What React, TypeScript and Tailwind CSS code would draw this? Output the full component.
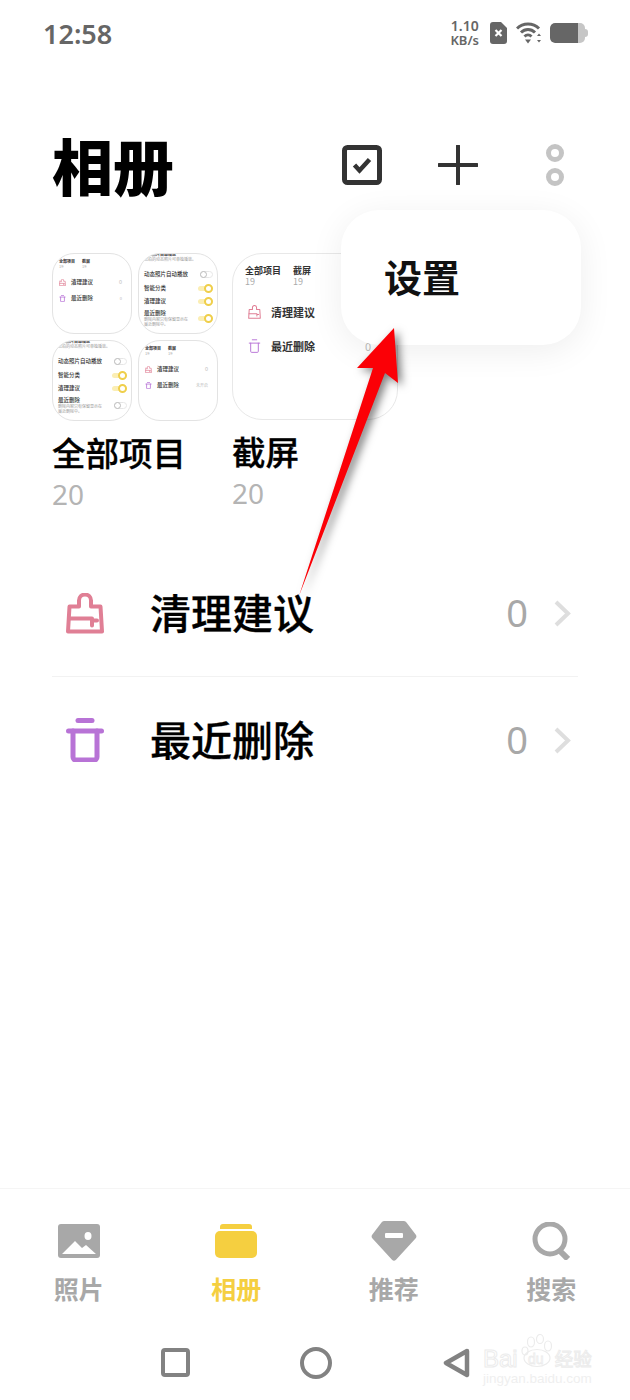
const CJK = "font-['Noto_Sans_CJK_SC','Noto_Sans',sans-serif]";

function Toggle({ on }: { on: boolean }) {
  return on ? (
    <span className="relative block h-[5px] w-[15px] shrink-0 rounded-full bg-[#fbeeb4]">
      <span className="absolute -top-[2px] right-0 size-[9px] rounded-full border-2 border-[#efcf4c] bg-white" />
    </span>
  ) : (
    <span className="relative block h-[7px] w-[13px] shrink-0 rounded-full border border-[#e6e6e6]">
      <span className="absolute -top-px -left-px size-[7px] rounded-full border border-[#bbbbbb] bg-white" />
    </span>
  );
}

function SettingsTile({ lastOn }: { lastOn: boolean }) {
  return (
    <div className="flex h-[81px] w-20 flex-col overflow-hidden rounded-[22px] border border-[#e3e3e3] pr-[4px] pl-[5px] text-[5.500px] leading-[8px] font-medium text-[#333]">
      <div className="mt-[-2px] h-[13px] text-[4px] leading-[5px] font-normal text-[#999]">
        <p className="font-bold text-[#333]">动态照片自动播放</p>
        <p>您拍的动态照片可单独播放。</p>
      </div>
      <div className="mt-[5px] flex items-center justify-between">
        <span>动态照片自动播放</span>
        <Toggle on={false} />
      </div>
      <div className="mt-[6px] flex items-center justify-between">
        <span>智能分类</span>
        <Toggle on />
      </div>
      <div className="mt-[5px] flex items-center justify-between">
        <span>清理建议</span>
        <Toggle on />
      </div>
      <div className="mt-[4px] flex items-center justify-between">
        <div className="w-[46px]">
          <p>最近删除</p>
          <p className="text-[4px] leading-[5px] font-normal text-[#999]">删除内容只有保留显示在最近删除中。</p>
        </div>
        <Toggle on={lastOn} />
      </div>
    </div>
  );
}

function BrushIcon({ className, stroke = 4 }: { className: string; stroke?: number }) {
  return (
    <svg viewBox="0 0 38 40" className={className} fill="none" stroke="currentColor" strokeWidth={stroke} strokeLinejoin="round" strokeLinecap="round">
      <path d="M13 13V7a6 6 0 0 1 12 0v6h9.500L36 38H2l1.500-25Z" />
      <path d="M3 25h23v7M26 27h5" />
    </svg>
  );
}

function TrashIcon({ className, stroke = 5 }: { className: string; stroke?: number }) {
  return (
    <svg viewBox="0 0 38 44" className={className} fill="none" stroke="currentColor" strokeWidth={stroke} strokeLinecap="round" strokeLinejoin="round">
      <path d="M12 2.500h14" />
      <path d="M2.500 13h33" />
      <path d="M7 13v26a3 3 0 0 0 3 3h18a3 3 0 0 0 3-3V13" />
    </svg>
  );
}

function HomeTile({ second }: { second: string }) {
  return (
    <div className="h-[81px] w-20 overflow-hidden rounded-[22px] border border-[#e3e3e3] px-[6px] pt-[5px] text-[#333]">
      <div className="flex gap-[7px] text-[4px] leading-[5px] font-bold">
        <div>
          <p>全部项目</p>
          <p className="font-normal text-[#aaa]">19</p>
        </div>
        <div>
          <p>截屏</p>
          <p className="font-normal text-[#aaa]">19</p>
        </div>
      </div>
      <div className="mt-[9px] flex items-center text-[5.500px] leading-[8px] font-medium">
        <BrushIcon className="mr-[5px] h-[7px] w-[7px] text-[#e07f95]" />
        <span>清理建议</span>
        <span className="ml-auto pr-[3px] font-normal text-[#bbb]">0</span>
      </div>
      <div className="mt-[8px] flex items-center text-[5.500px] leading-[8px] font-medium">
        <TrashIcon className="mr-[5px] h-[7px] w-[7px] text-[#b873d6]" />
        <span>最近删除</span>
        <span className="ml-auto pr-[3px] text-[4px] font-normal text-[#bbb]">{second}</span>
      </div>
    </div>
  );
}

function AlbumLarge() {
  return (
    <div className="h-[167px] w-[166px] overflow-hidden rounded-[30px] border border-[#e8e8e8] pt-[11px] pl-[12px] text-[#333]">
      <div className="flex gap-[12px] text-[9px] leading-[11px] font-bold">
        <div>
          <p>全部项目</p>
          <p className="font-normal text-[#aaa]">19</p>
        </div>
        <div>
          <p>截屏</p>
          <p className="font-normal text-[#aaa]">19</p>
        </div>
      </div>
      <div className="mt-[18px] ml-[3px] flex items-center text-[11px] leading-[14px] font-bold">
        <BrushIcon className="mr-[10px] h-[14px] w-[13px] text-[#e07f95]" stroke={3} />
        <span>清理建议</span>
      </div>
      <div className="mt-[20px] ml-[3px] flex items-center text-[11px] leading-[14px] font-bold">
        <TrashIcon className="mr-[10px] h-[14px] w-[13px] text-[#b873d6]" stroke={3} />
        <span>最近删除</span>
        <span className="ml-[50px] text-[11px] font-normal text-[#bbb]">0</span>
      </div>
    </div>
  );
}

function ListRow({ icon, label }: { icon: React.ReactNode; label: string }) {
  return (
    <div className="flex h-[126px] items-center pr-[7px] pl-[14px]">
      <div className="flex w-[84px] items-center">{icon}</div>
      <span className="mt-[-3px] text-[41px] leading-none font-medium text-black [-webkit-text-stroke:0.3px_#000]">{label}</span>
      <span className="mt-[-2px] ml-auto font-['Noto_Sans',sans-serif] text-[38px] leading-none text-[#a8a8a8]">0</span>
      <svg viewBox="0 0 17 27" className="ml-[26px] h-[27px] w-[17px]" fill="none">
        <path d="M2 2l12 11.500L2 25" stroke="#dedede" strokeWidth="4" />
      </svg>
    </div>
  );
}

function NavItem({ icon, label, active }: { icon: React.ReactNode; label: string; active?: boolean }) {
  return (
    <div className={`flex w-1/4 flex-col items-center ${active ? 'text-[#f5cf40]' : 'text-[#a8a8a8]'}`}>
      <div className="flex h-[40px] items-center">{icon}</div>
      <span className="mt-[10px] text-[25px] leading-[34px] font-bold">{label}</span>
    </div>
  );
}

export default function App() {
  return (
    <div className={`relative flex h-[1400px] w-[630px] flex-col overflow-hidden bg-white ${CJK}`}>
      {/* status bar */}
      <div className="flex h-[66px] items-center pr-[42px] pl-[43px] text-[#666]">
        <span className="font-['Noto_Sans',sans-serif] text-[27px] leading-none font-semibold">12:58</span>
        <div className="ml-auto flex items-center">
          <div className="text-center font-['Noto_Sans',sans-serif] text-[13px] leading-[14px] font-semibold">
            <p className="text-[14px]">1.10</p>
            <p>KB/s</p>
          </div>
          <svg viewBox="0 0 17 22" className="ml-[11px] h-[22px] w-[17px]">
            <path d="M3 0h8l6 6v13a3 3 0 0 1-3 3H3a3 3 0 0 1-3-3V3a3 3 0 0 1 3-3Z" fill="#666" />
            <path d="M5.500 8l6 6M11.500 8l-6 6" stroke="#fff" strokeWidth="2.200" />
          </svg>
          <svg viewBox="0 0 26 22" className="ml-[9px] h-[22px] w-[26px]" fill="none" stroke="#666" strokeWidth="3">
            <path d="M1 6.500c6-6 16-6 22 0" />
            <path d="M5 10.500c4-4 10-4 14 0" />
            <path d="M8.500 14.500c2-2 5-2 7 0" />
            <path d="M9 17.500h6L12 21.500Z" fill="#666" stroke="none" />
            <path d="M21 14l2-2.500 2 2.500ZM21 18l2 2.500 2-2.500Z" fill="#666" stroke="none" />
          </svg>
          <div className="ml-[8px] flex h-[20px] w-[35px] overflow-hidden rounded-[5px] bg-[#c6c6c6]">
            <div className="h-full w-[28px] rounded-l-[5px] bg-[#666]" />
          </div>
          <div className="h-[8px] w-[3px] rounded-r-full bg-[#c6c6c6]" />
        </div>
      </div>

      {/* header */}
      <div className="mt-[35px] flex h-[127px] items-center pr-[66px] pl-[52px]">
        <h1 className="text-[61px] leading-none font-black text-black">相册</h1>
        <svg viewBox="0 0 40 40" className="ml-auto size-[40px]" fill="none">
          <rect x="2.500" y="2.500" width="35" height="35" rx="3" stroke="#333" strokeWidth="5" />
          <path d="M12.500 20l5 5.500 10-11" stroke="#333" strokeWidth="4.500" />
        </svg>
        <svg viewBox="0 0 40 40" className="ml-[56px] size-[40px]" fill="none">
          <path d="M20 1v38M1 20h38" stroke="#333" strokeWidth="4" strokeLinecap="round" />
        </svg>
        <svg viewBox="0 0 18 42" className="ml-[68px] h-[42px] w-[18px]" fill="none">
          <circle cx="9" cy="9" r="6.500" stroke="#c4c4c4" strokeWidth="5" />
          <circle cx="9" cy="33" r="6.500" stroke="#c4c4c4" strokeWidth="5" />
        </svg>
      </div>

      {/* albums */}
      <div className="mt-[25px] flex gap-[14px] pl-[52px]">
        <div className="w-[166px]">
          <div className="grid grid-cols-2 gap-[6px]">
            <HomeTile second="0" />
            <SettingsTile lastOn />
            <SettingsTile lastOn={false} />
            <HomeTile second="未开启" />
          </div>
          <p className="mt-[13px] text-[33.500px] leading-[36px] font-medium whitespace-nowrap text-black [-webkit-text-stroke:0.3px_#000]">全部项目</p>
          <p className="mt-[6px] font-['Noto_Sans',sans-serif] text-[28px] leading-[36px] text-[#b4b4b4]">20</p>
        </div>
        <div className="w-[166px]">
          <AlbumLarge />
          <p className="mt-[13px] text-[33.500px] leading-[36px] font-medium text-black [-webkit-text-stroke:0.3px_#000]">截屏</p>
          <p className="mt-[6px] font-['Noto_Sans',sans-serif] text-[28px] leading-[36px] text-[#b4b4b4]">20</p>
        </div>
      </div>

      {/* rows */}
      <div className="mx-[52px] mt-[38px]">
        <ListRow icon={<BrushIcon className="h-[41px] w-[38px] text-[#e07f95]" />} label="清理建议" />
        <div className="border-t border-[#f2f2f2]" />
        <ListRow icon={<TrashIcon className="h-[44px] w-[38px] text-[#b873d6]" />} label="最近删除" />
      </div>

      <div className="flex-1" />

      {/* bottom tabs */}
      <div className="flex h-[139px] border-t border-[#f5f5f5] pt-[32px]">
        <NavItem
          label="照片"
          icon={
            <svg viewBox="0 0 42 34" className="h-[34px] w-[42px]">
              <rect width="42" height="34" rx="3" fill="#a8a8a8" />
              <path d="M4 30l13-13 7 7 4-3 10 9Z" fill="#fff" />
              <ellipse cx="30" cy="12" rx="3.500" ry="4" fill="#fff" />
            </svg>
          }
        />
        <NavItem
          active
          label="相册"
          icon={
            <svg viewBox="0 0 42 34" className="h-[34px] w-[42px]" fill="#f5cf40">
              <path d="M5 5V3a3 3 0 0 1 3-3h26a3 3 0 0 1 3 3v2Z" />
              <rect y="7" width="42" height="27" rx="5" />
            </svg>
          }
        />
        <NavItem
          label="推荐"
          icon={
            <svg viewBox="0 0 46 40" className="h-[40px] w-[46px]">
              <path d="M13 0h20a3 3 0 0 1 2.500 1.500L45 14a3 3 0 0 1-.5 3.500L25 38.800a3 3 0 0 1-4 0L1.500 17.500A3 3 0 0 1 1 14L10.500 1.500A3 3 0 0 1 13 0Z" fill="#a8a8a8" />
              <rect x="14" y="12" width="18" height="5" rx="1" fill="#fff" />
            </svg>
          }
        />
        <NavItem
          label="搜索"
          icon={
            <svg viewBox="0 0 38 38" className="h-[38px] w-[38px]" fill="none" stroke="#a8a8a8">
              <circle cx="18" cy="17" r="15" strokeWidth="5" />
              <path d="M28 29l8 8" strokeWidth="6" />
            </svg>
          }
        />
      </div>

      {/* system nav */}
      <div className="flex h-[73px] items-start pt-[21px] pl-[161px]">
        <div className="size-[29px] rounded-[4px] border-[4px] border-[#828282]" />
        <div className="mt-[-1px] ml-[110px] h-[32px] w-[32px] rounded-full border-[4px] border-[#828282]" />
        <svg viewBox="0 0 28 30" className="ml-[111px] h-[30px] w-[28px]" fill="none">
          <path d="M24 3L3 15l21 12Z" stroke="#828282" strokeWidth="4.500" strokeLinejoin="round" />
        </svg>
      </div>

      {/* settings popup */}
      <div className="absolute top-[210px] left-[341px] flex h-[135px] w-[240px] items-center rounded-[38px] bg-white pb-[4px] pl-[43px] shadow-[0_6px_34px_rgba(0,0,0,0.07)]">
        <span className="text-[38px] leading-none font-bold text-[#111]">设置</span>
      </div>

      {/* red annotation arrow */}
      <svg viewBox="0 0 630 1400" className="pointer-events-none absolute inset-0 h-[1400px] w-[630px] drop-shadow-[4px_3px_4px_rgba(0,0,0,0.5)]">
        <path d="M394 328L357 368L373 368L299 596L385 373L398 383Z" fill="#fb0006" />
      </svg>

      {/* baidu watermark */}
      <div className="absolute top-[1347px] left-[483px] w-[112px] font-['Liberation_Sans',sans-serif] text-white">
        <div className="flex h-[23px] items-center text-[24px] leading-[23px] [-webkit-text-stroke:1px_#ececec]">
          <span>Bai</span>
          <span className={`ml-[37px] text-[18.500px] whitespace-nowrap ${CJK}`}>经验</span>
        </div>
        <p className="mt-[2px] text-[13.500px] leading-[14px] whitespace-nowrap text-[#efefef]">jingyan.baidu.com</p>
      </div>
      <svg viewBox="0 0 34 34" className="absolute top-[1334px] left-[520px] h-[34px] w-[34px]" fill="none" stroke="#ececec" strokeWidth="1.200">
        <ellipse cx="5" cy="17" rx="3" ry="4" />
        <ellipse cx="11" cy="8" rx="3.500" ry="5" />
        <ellipse cx="20" cy="5" rx="3.500" ry="4.500" />
        <ellipse cx="28" cy="12" rx="3.500" ry="5" />
        <ellipse cx="17" cy="24" rx="13" ry="8.500" />
      </svg>
      <span className="absolute top-[1351px] left-[528px] font-['Liberation_Sans',sans-serif] text-[14px] leading-[16px] text-white [-webkit-text-stroke:0.8px_#ececec]">du</span>
    </div>
  );
}
